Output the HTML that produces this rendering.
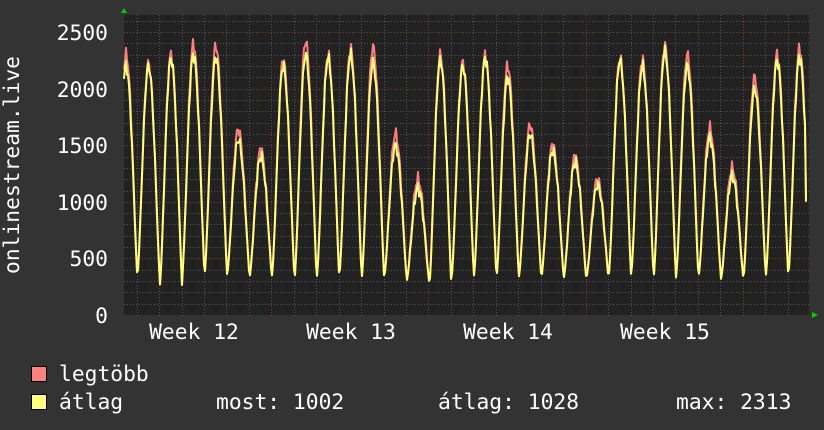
<!DOCTYPE html>
<html><head><meta charset="utf-8"><style>
html,body{margin:0;padding:0;background:#333;}
body{width:824px;height:430px;overflow:hidden;position:relative;font-family:"DejaVu Sans Mono","Liberation Mono",monospace;color:#fff;}
svg{position:absolute;left:0;top:0;}
</style></head><body>
<svg id="g" width="824" height="430" xmlns="http://www.w3.org/2000/svg" font-family="DejaVu Sans Mono, Liberation Mono, monospace" font-size="21.3" fill="#fff">
<rect x="0" y="0" width="824" height="430" fill="#333"/>
<rect x="124" y="15" width="685" height="300" fill="#222"/>
<g id="grid"></g>
<g id="lines"></g>
<polygon points="121,13 127,13 124,8" fill="#0c0"/>
<polygon points="812,312 812,318 818,315" fill="#0c0"/>
<g text-anchor="end">
<text x="108" y="40">2500</text>
<text x="108" y="97">2000</text>
<text x="108" y="153">1500</text>
<text x="108" y="210">1000</text>
<text x="108" y="266">500</text>
<text x="108" y="323">0</text>
</g>
<g text-anchor="middle">
<text x="194" y="339">Week 12</text>
<text x="351" y="339">Week 13</text>
<text x="508" y="339">Week 14</text>
<text x="665" y="339">Week 15</text>
</g>
<text transform="translate(19,165) rotate(-90)" text-anchor="middle">onlinestream.live</text>
<rect x="31.5" y="366.5" width="15" height="15" fill="#ff8080" stroke="#000"/>
<rect x="31.5" y="394.5" width="15" height="15" fill="#ffff80" stroke="#000"/>
<text x="59" y="381">legtöbb</text>
<text x="59" y="409">átlag</text>
<text x="216" y="409">most: 1002</text>
<text x="438" y="409">átlag: 1028</text>
<text x="676" y="409">max: 2313</text>
</svg>
<script>
(function(){
var NS="http://www.w3.org/2000/svg";
var grid=document.getElementById("grid"),lines=document.getElementById("lines");
function ln(x1,y1,x2,y2,c){var l=document.createElementNS(NS,"line");l.setAttribute("x1",x1);l.setAttribute("y1",y1);l.setAttribute("x2",x2);l.setAttribute("y2",y2);l.setAttribute("stroke",c);l.setAttribute("stroke-width","1");l.setAttribute("stroke-dasharray","1,2");grid.appendChild(l);}
function Y(v){return 315-v*0.11316;}
for(var v=100;v<=2600;v+=100){var y=Math.round(Y(v))+0.5;if(y<15)break;ln(124,y,809,y,v%500==0?"#7a4040":"#555");}
for(var k=-6;k<=24;k++){var x=Math.round(271.3+22.45*k)+0.5;if(x<125||x>809)continue;ln(x,15,x,318,k%7==0?"#7a4040":"#555");}
var mx=[2300,2220,2300,2390,2380,1640,1460,2250,2420,2300,2350,2370,1600,1200,2300,2230,2290,2200,1680,1500,1400,1200,2270,2250,2380,2300,1650,1300,2100,2300,2350];
var av=[2200,2200,2270,2300,2280,1550,1400,2200,2300,2270,2300,2230,1500,1120,2250,2200,2270,2100,1600,1450,1350,1150,2250,2200,2330,2200,1570,1230,2000,2250,2280];
var tr=[350,330,250,350,360,350,330,350,300,340,340,330,330,300,230,330,350,330,340,330,330,320,350,360,330,340,340,320,330,350,350];
function val(x,arr,seed){var d=(x-126)/22.45;var k=Math.round(d);if(k<0)k=0;if(k>30)k=30;var t=d-k;
var c=(1+Math.cos(2*Math.PI*t))/2;
var f=t<0?Math.pow(c,0.75):Math.pow(c,0.6);
var n=Math.sin(x*1.7+seed)*40+Math.sin(x*3.1)*25;
return tr[k]+(arr[k]-tr[k])*f+n*f;}
function path(arr,seed,col){var d="";for(var x=124;x<=806;x++){var v=val(x,arr,seed);if(x==806)v=arr===av?1002:1000;d+=(x==124?"M":"L")+x+","+Y(v).toFixed(1);}
var p=document.createElementNS(NS,"path");p.setAttribute("d",d);p.setAttribute("fill","none");p.setAttribute("stroke",col);p.setAttribute("stroke-width","2");p.setAttribute("stroke-linejoin","round");lines.appendChild(p);}
path(mx,1,"#ff7f7f");path(av,2,"#ffff80");
})();
</script>
</body></html>
